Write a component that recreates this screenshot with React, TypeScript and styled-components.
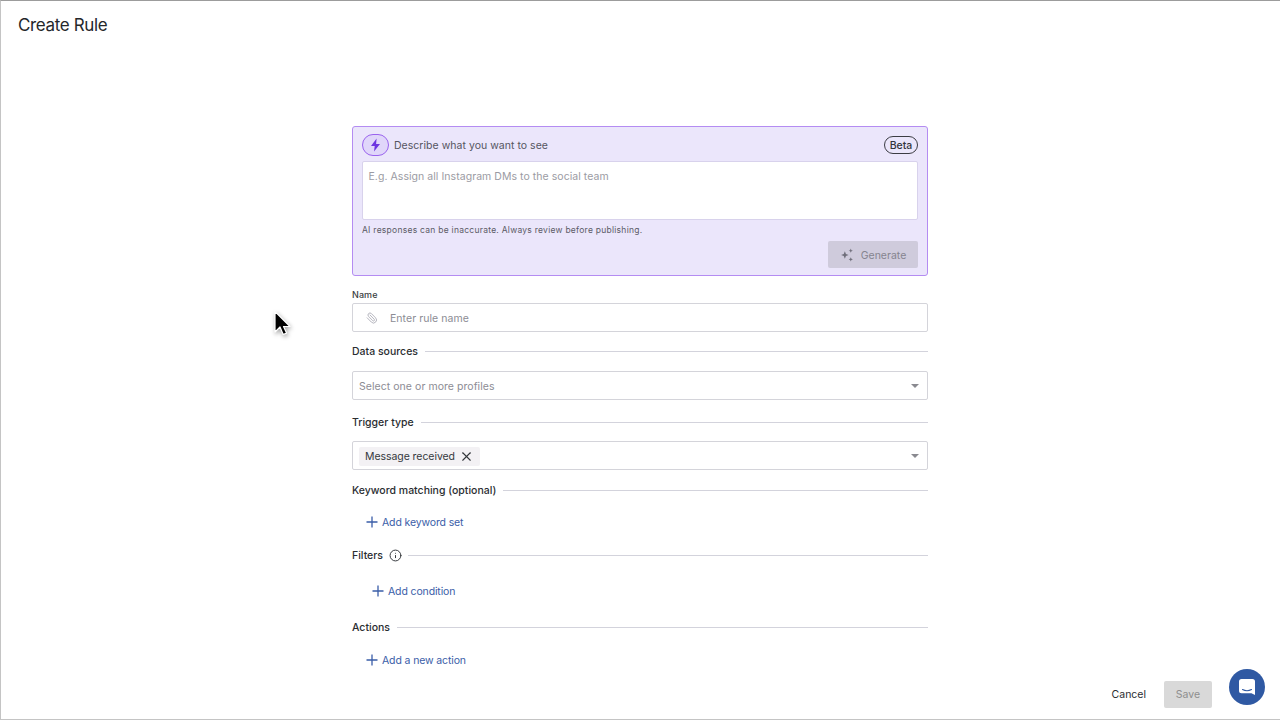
import React from "react";
import styled, { createGlobalStyle } from "styled-components";
import { Paperclip, X, Info } from "lucide-react";

const Global = createGlobalStyle`
  html, body { margin: 0; padding: 0; background: #fff; }
  #root { width: 1280px; height: 720px; }
  * { box-sizing: border-box; }
`;

const Page = styled.div`
  position: relative;
  width: 1280px;
  height: 720px;
  display: flex;
  flex-direction: column;
  overflow: hidden;
  background: #fff;
  border-top: 1px solid #9c9c9c;
  border-left: 1px solid #c4c4c4;
  border-bottom: 1px solid #c4c4c4;
  font-family: Inter, "Liberation Sans", sans-serif;
  color: #2a2e33;
`;

const Header = styled.header`
  height: 125px;
  flex: none;
  padding: 13px 0 0 17px;
`;

const Title = styled.h1`
  margin: 0;
  font-size: 17px;
  line-height: 22px;
  font-weight: 400;
  letter-spacing: -0.37px;
  color: #24272b;
`;

const Main = styled.main`
  flex: 1;
  width: 576px;
  margin-left: 351px;
  display: flex;
  flex-direction: column;
`;

const AiCard = styled.section`
  height: 150px;
  padding: 6px 9px 0;
  background: #ebe6fb;
  border: 1px solid #b48cf2;
  border-radius: 3px;
  display: flex;
  flex-direction: column;
`;

const AiHead = styled.div`
  height: 23px;
  display: flex;
  align-items: center;
  gap: 5px;
`;

const BoltPill = styled.span`
  width: 27px;
  height: 22px;
  border: 1px solid #9a63ee;
  border-radius: 11px;
  background: #e0d6fa;
  display: flex;
  align-items: center;
  justify-content: center;
`;

const AiTitle = styled.span`
  flex: 1;
  padding-top: 1px;
  font-size: 10.5px;
  color: #55555f;
  letter-spacing: 0.03px;
`;

const Beta = styled.span`
  width: 34px;
  height: 18px;
  border: 1px solid #3c3c44;
  border-radius: 9px;
  font-size: 10.5px;
  line-height: 17px;
  text-align: center;
  font-weight: 500;
  color: #33343b;
`;

const PromptBox = styled.div`
  margin-top: 5px;
  height: 59px;
  padding: 8px 5.5px;
  background: #fff;
  border: 1px solid #d8d2ec;
  border-radius: 2px;
  font-size: 10.5px;
  line-height: 14px;
  color: #9b9ba3;
  letter-spacing: 0.05px;
`;

const Hint = styled.p`
  margin: 5px 0 0;
  font-size: 8.5px;
  line-height: 11px;
  letter-spacing: 0.26px;
  color: #5b5b66;
`;

const GenerateRow = styled.div`
  margin-top: 5px;
  display: flex;
  justify-content: flex-end;
`;

const Generate = styled.div`
  width: 90px;
  height: 27px;
  padding-top: 1px;
  border-radius: 2px;
  background: #cfcbdc;
  display: flex;
  align-items: center;
  justify-content: center;
  gap: 7px;
  font-size: 10.5px;
  color: #85848f;
`;

const NameLabel = styled.label`
  margin-top: 13px;
  font-size: 9px;
  line-height: 11px;
  font-weight: 500;
  letter-spacing: 0.1px;
  color: #3a3d42;
`;

const Field = styled.div<{ $mt?: number; $h: number }>`
  margin-top: ${(p) => p.$mt ?? 0}px;
  height: ${(p) => p.$h}px;
  flex: none;
  padding-top: 1px;
  border: 1px solid #d4d4da;
  border-radius: 2px;
  background: #fff;
  display: flex;
  align-items: center;
  position: relative;
  font-size: 10.5px;
  letter-spacing: 0.05px;
  color: #8c8c94;
`;

const ClipSlot = styled.span`
  width: 31px;
  padding-left: 6px;
  display: flex;
  justify-content: center;
  color: #a9a9b3;
  svg {
    transform: scaleX(-1);
  }
`;

const Placeholder = styled.span`
  padding-left: 6px;
  flex: 1;
`;

const Caret = styled.span`
  width: 0;
  height: 0;
  margin-right: 8px;
  border-left: 4px solid transparent;
  border-right: 4px solid transparent;
  border-top: 4.5px solid #8a8a90;
`;

const Chip = styled.span`
  margin-left: 6px;
  height: 19px;
  width: 121px;
  padding-left: 6px;
  display: flex;
  align-items: center;
  gap: 4.5px;
  background: #f3f1f4;
  border-radius: 2px;
  color: #35383d;
  font-size: 10.5px;
  letter-spacing: -0.06px;
`;

const Spacer = styled.span`
  flex: 1;
`;

const SectionHead = styled.div<{ $mt: number }>`
  margin-top: ${(p) => p.$mt}px;
  height: 14px;
  flex: none;
  display: flex;
  align-items: center;
  gap: 7px;
  font-size: 10.5px;
  font-weight: 500;
  color: #2a2d31;
  &::after {
    content: "";
    flex: 1;
    height: 1px;
    background: #d3d3dc;
  }
`;

const InfoSlot = styled.span`
  display: flex;
  margin: 0 -1px;
  color: #33363b;
`;

const AddLink = styled.div<{ $mt: number; $ml: number }>`
  margin-top: ${(p) => p.$mt}px;
  margin-left: ${(p) => p.$ml}px;
  height: 14px;
  flex: none;
  display: flex;
  align-items: center;
  gap: 4px;
  font-size: 10.5px;
  letter-spacing: -0.13px;
  color: #3a5da8;
`;

const Footer = styled.footer`
  height: 54px;
  flex: none;
  padding: 14px 68px 0 0;
  display: flex;
  justify-content: flex-end;
  align-items: flex-start;
  gap: 18px;
`;

const Cancel = styled.span`
  line-height: 27px;
  font-size: 10.5px;
  color: #2a2d31;
`;

const Save = styled.span`
  width: 48px;
  height: 27px;
  line-height: 27px;
  border-radius: 2px;
  text-align: center;
  font-size: 10.5px;
  background: #d9d9d9;
  color: #8e8e8e;
`;

const ChatBubble = styled.div`
  position: absolute;
  left: 1228px;
  top: 668px;
  width: 36px;
  height: 36px;
  border-radius: 50%;
  background: #2f59a3;
  display: flex;
  align-items: center;
  justify-content: center;
`;

const Cursor = styled.svg`
  position: absolute;
  left: 272px;
  top: 309px;
  filter: drop-shadow(1px 2px 2px rgba(0, 0, 0, 0.35));
`;

const PlusGlyph = () => (
  <svg width="12" height="12" viewBox="0 0 12 12" fill="none" stroke="currentColor" strokeWidth="1.3">
    <path d="M6 .5v11M.5 6h11" />
  </svg>
);

export default function App() {
  return (
    <Page>
      <Global />
      <Header>
        <Title>Create Rule</Title>
      </Header>
      <Main>
        <AiCard>
          <AiHead>
            <BoltPill>
              <svg width="11" height="14" viewBox="0 0 11 14">
                <path d="M6.6 0.5 1 7.9h3.7L4 13.5l6-7.6H6.1z" fill="#6d35e0" />
              </svg>
            </BoltPill>
            <AiTitle>Describe what you want to see</AiTitle>
            <Beta>Beta</Beta>
          </AiHead>
          <PromptBox>E.g. Assign all Instagram DMs to the social team</PromptBox>
          <Hint>AI responses can be inaccurate. Always review before publishing.</Hint>
          <GenerateRow>
            <Generate>
              <svg width="14" height="14" viewBox="0 0 13 13" fill="#6f6e7a">
                <path d="M4.5 3 5.5 5.5 8 6.5 5.5 7.5 4.5 10 3.500 7.500 1 6.500 3.500 5.500z" />
                <path d="M10 0.500 10.600 2 12 2.500 10.600 3.100 10 4.500 9.400 3.100 8 2.500 9.400 2z" />
                <path d="M10 8.500 10.600 10 12 10.500 10.600 11.100 10 12.500 9.400 11.100 8 10.500 9.400 10z" />
              </svg>
              Generate
            </Generate>
          </GenerateRow>
        </AiCard>

        <NameLabel>Name</NameLabel>
        <Field $mt={3} $h={29}>
          <ClipSlot>
            <Paperclip size={12} strokeWidth={1.7} />
          </ClipSlot>
          <Placeholder>Enter rule name</Placeholder>
        </Field>

        <SectionHead $mt={12}>Data sources</SectionHead>
        <Field $mt={13} $h={29}>
          <Placeholder>Select one or more profiles</Placeholder>
          <Caret />
        </Field>

        <SectionHead $mt={15}>Trigger type</SectionHead>
        <Field $mt={12} $h={29}>
          <Chip>
            Message received
            <X size={15} strokeWidth={1.8} color="#33363b" />
          </Chip>
          <Spacer />
          <Caret />
        </Field>

        <SectionHead $mt={13}>Keyword matching (optional)</SectionHead>
        <AddLink $mt={18} $ml={14}>
          <PlusGlyph />
          Add keyword set
        </AddLink>

        <SectionHead $mt={19}>
          Filters
          <InfoSlot>
            <Info size={13} strokeWidth={1.8} />
          </InfoSlot>
        </SectionHead>
        <AddLink $mt={22} $ml={20}>
          <PlusGlyph />
          Add condition
        </AddLink>

        <SectionHead $mt={22}>Actions</SectionHead>
        <AddLink $mt={19} $ml={14}>
          <PlusGlyph />
          Add a new action
        </AddLink>
      </Main>
      <Footer>
        <Cancel>Cancel</Cancel>
        <Save>Save</Save>
      </Footer>
      <ChatBubble>
        <svg width="18" height="18" viewBox="0 0 18 18">
          <path d="M3.500 1h11A2.500 2.500 0 0 1 17 3.500V17l-3.500-1.800h-10A2.500 2.500 0 0 1 1 12.700V3.500A2.500 2.500 0 0 1 3.500 1z" fill="#fff" />
          <path d="M4.500 11.500c2.800 1.500 6.200 1.500 9 0" stroke="#2f59a3" strokeWidth="1.100" fill="none" strokeLinecap="round" />
        </svg>
      </ChatBubble>
      <Cursor width="18" height="28" viewBox="0 0 18 28">
        <path d="M2 1.500V22l5-5 3.200 7.500 3.400-1.400L10.500 16.500h6.500z" fill="#000" stroke="#fff" strokeWidth="1.200" strokeLinejoin="round" />
      </Cursor>
    </Page>
  );
}
